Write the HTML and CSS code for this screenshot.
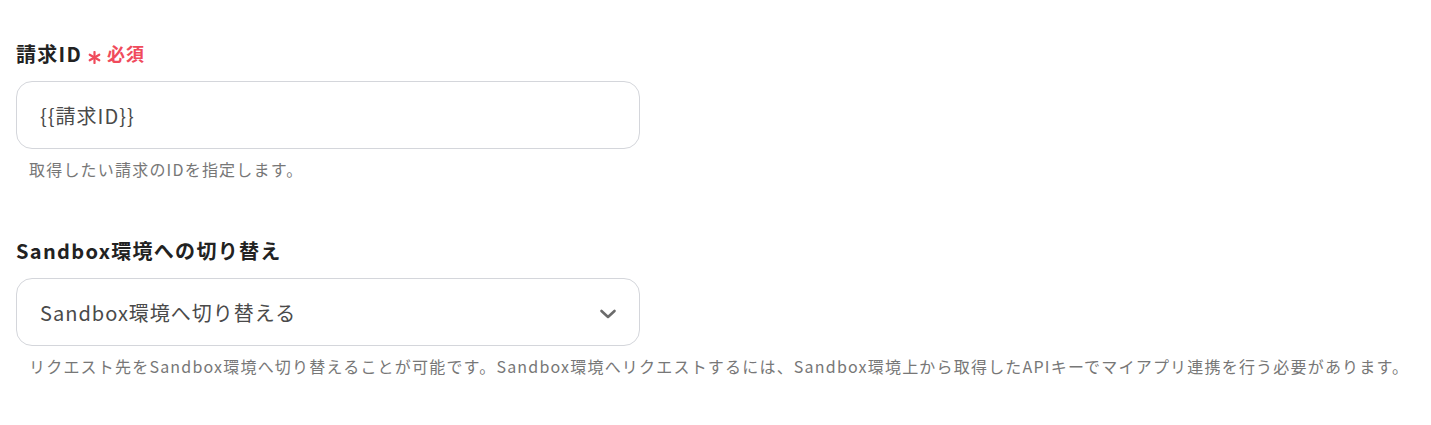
FILE: index.html
```html
<!DOCTYPE html>
<html lang="ja">
<head>
<meta charset="utf-8">
<link rel="stylesheet" href="styles.css">
</head>
<body>
<div class="form">
  <div class="field">
    <div class="label">請求ID<span class="req"><svg class="star" width="13" height="13" viewBox="0 0 13 13"><g stroke="#f04b5c" stroke-width="2.2" stroke-linecap="round"><path d="M6.5 1 V12"/><path d="M1.7 3.75 L11.3 9.25"/><path d="M1.7 9.25 L11.3 3.75"/></g></svg>必須</span></div>
    <div class="box">{{請求ID}}</div>
    <div class="help">取得したい請求のIDを指定します。</div>
  </div>
  <div class="field">
    <div class="label">Sandbox環境への切り替え</div>
    <div class="box select">
      <span>Sandbox環境へ切り替える</span>
      <svg class="chev" width="18" height="12" viewBox="0 0 18 12"><path d="M2.5 3 L9 9 L15.5 3" fill="none" stroke="#6b6b6b" stroke-width="2.6" stroke-linecap="round" stroke-linejoin="round"/></svg>
    </div>
    <div class="help">リクエスト先をSandbox環境へ切り替えることが可能です。Sandbox環境へリクエストするには、Sandbox環境上から取得したAPIキーでマイアプリ連携を行う必要があります。</div>
  </div>
</div>
</body>
</html>
```

FILE: styles.css
```css
html, body {
  margin: 0;
  padding: 0;
  background: #fff;
}
body {
  font-family: "Noto Sans CJK JP", "Noto Sans", sans-serif;
  color: #333;
}
.form {
  padding: 40px 16px 0 16px;
  display: flex;
  flex-direction: column;
  gap: 57px;
}
.field {
  display: flex;
  flex-direction: column;
}
.label {
  font-size: 20px;
  font-weight: 700;
  line-height: 27px;
  letter-spacing: 1.3px;
  color: #222;
  display: flex;
  align-items: center;
}
.req {
  color: #f04b5c;
  font-size: 18px;
  font-weight: 700;
  letter-spacing: 1px;
  display: inline-flex;
  align-items: center;
  margin-left: 6px;
}
.star {
  display: block;
  margin-right: 6px;
  position: relative;
  top: 4px;
}
.box {
  margin-top: 14px;
  width: 624px;
  height: 68px;
  box-sizing: border-box;
  border: 1px solid #d4d6db;
  border-radius: 16px;
  padding: 0 22px 0 23px;
  display: flex;
  align-items: center;
  font-size: 20px;
  letter-spacing: 1px;
  color: #4a4a4a;
}
.select {
  justify-content: space-between;
}
.chev {
  display: block;
  position: relative;
  top: 2px;
}
.help {
  margin-top: 10px;
  padding-left: 13px;
  font-size: 16px;
  line-height: 21px;
  letter-spacing: 1.2px;
  color: #777;
  white-space: nowrap;
}
```
